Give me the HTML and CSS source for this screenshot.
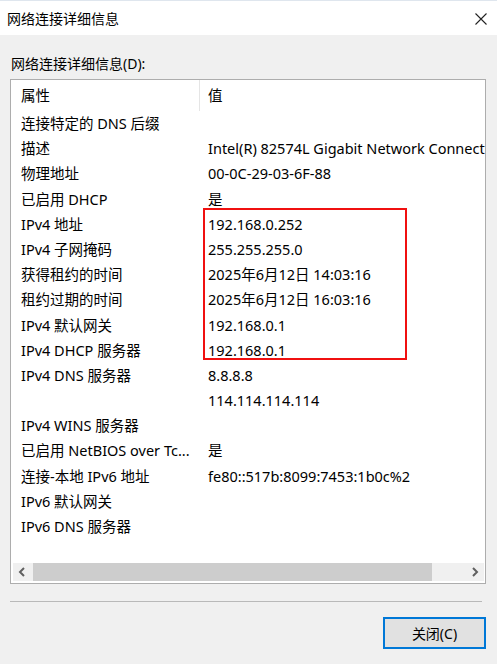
FILE: index.html
```html
<!DOCTYPE html>
<html lang="zh-CN">
<head>
    <meta charset="UTF-8">
    <title>网络连接详细信息</title>
    <link rel="stylesheet" href="styles.css">
</head>
<body>
    <div class="titlebar">
        <span class="title">网络连接详细信息</span>
        <svg class="close" width="14" height="14" viewBox="0 0 14 14">
            <path d="M1.5 1.5 L12.5 12.5 M12.5 1.5 L1.5 12.5" stroke="#222" stroke-width="1.1" fill="none"/>
        </svg>
    </div>
    <div class="content">
        <div class="caption">网络连接详细信息(D):</div>
        <div class="list">
            <div class="row header"><span>属性</span><span class="val">值</span></div>
            <div class="row"><span>连接特定的 DNS 后缀</span><span class="val"></span></div>
            <div class="row"><span>描述</span><span class="val">Intel(R) 82574L Gigabit Network Connection</span></div>
            <div class="row"><span>物理地址</span><span class="val">00-0C-29-03-6F-88</span></div>
            <div class="row"><span>已启用 DHCP</span><span class="val">是</span></div>
            <div class="row"><span>IPv4 地址</span><span class="val">192.168.0.252</span></div>
            <div class="row"><span>IPv4 子网掩码</span><span class="val">255.255.255.0</span></div>
            <div class="row"><span>获得租约的时间</span><span class="val">2025年6月12日 14:03:16</span></div>
            <div class="row"><span>租约过期的时间</span><span class="val">2025年6月12日 16:03:16</span></div>
            <div class="row"><span>IPv4 默认网关</span><span class="val">192.168.0.1</span></div>
            <div class="row"><span>IPv4 DHCP 服务器</span><span class="val">192.168.0.1</span></div>
            <div class="row"><span>IPv4 DNS 服务器</span><span class="val">8.8.8.8</span></div>
            <div class="row"><span></span><span class="val">114.114.114.114</span></div>
            <div class="row"><span>IPv4 WINS 服务器</span><span class="val"></span></div>
            <div class="row"><span>已启用 NetBIOS over Tc...</span><span class="val">是</span></div>
            <div class="row"><span>连接-本地 IPv6 地址</span><span class="val">fe80::517b:8099:7453:1b0c%2</span></div>
            <div class="row"><span>IPv6 默认网关</span><span class="val"></span></div>
            <div class="row"><span>IPv6 DNS 服务器</span><span class="val"></span></div>
            <div class="spacer"></div>
            <div class="hscroll">
                <svg class="arrow" width="20" height="18" viewBox="0 0 20 18">
                    <path d="M11 5 L7 9 L11 13" stroke="#606060" stroke-width="2" fill="none"/>
                </svg>
                <div class="thumb"></div>
                <div class="track"></div>
                <svg class="arrow" width="20" height="18" viewBox="0 0 20 18">
                    <path d="M9 5 L13 9 L9 13" stroke="#606060" stroke-width="2" fill="none"/>
                </svg>
            </div>
            <!-- highlight drawn over the screenshot -->
            <div class="mark"></div>
        </div>
        <div class="separator"></div>
        <div class="actions">
            <button class="btn">关闭(C)</button>
        </div>
    </div>
</body>
</html>
```

FILE: styles.css
```css
body {
    margin: 0;
    background-color: #f0f0f0;
    font-family: "Noto Sans", "Noto Sans CJK SC", sans-serif;
    font-size: 14.5px;
    color: #000;
    width: 497px;
    height: 664px;
    overflow: hidden;
}
.titlebar {
    height: 34px;
    background: white;
    border-top: 1px solid #dfe6ee;
    display: flex;
    align-items: center;
    justify-content: space-between;
    padding: 0 9px 0 7px;
}
.title {
    font-size: 14px;
}
.close {
    display: block;
    margin-top: 1px;
}
.content {
    padding: 0 11px 0 10px;
}
.caption {
    margin-top: 20px;
    margin-left: 1px;
    line-height: 18px;
    height: 18px;
    font-size: 14px;
}
.list {
    position: relative;
    margin-top: 6px;
    height: 503px;
    border: 1px solid #adadad;
    background: white;
    overflow: hidden;
    display: flex;
    flex-direction: column;
}
.row {
    display: grid;
    grid-template-columns: 188px 1fr;
    height: 25.2px;
    line-height: 25px;
    white-space: nowrap;
    flex-shrink: 0;
}
.row span {
    padding-left: 10px;
    overflow: hidden;
}
.row .val {
    padding-left: 9px;
    overflow: visible;
}
.row.header {
    height: 31px;
    line-height: 30px;
}
.row.header .val {
    border-left: 1px solid #e5e5e5;
    padding-left: 8px;
}
.spacer {
    flex: 1;
}
.hscroll {
    display: flex;
    height: 18px;
    margin: 0 1px 2px 2px;
    background: #f0f0f0;
    flex-shrink: 0;
}
.arrow {
    display: block;
    flex-shrink: 0;
}
.thumb {
    width: 399px;
    background: #cdcdcd;
}
.track {
    flex: 1;
}
.mark {
    position: absolute;
    left: 192px;
    top: 128px;
    width: 204px;
    height: 152px;
    border: 2px solid #f01010;
    box-sizing: border-box;
}
.separator {
    margin-top: 17px;
    margin-right: 4px;
    border-top: 1px solid #b9b9b9;
}
.actions {
    display: flex;
    justify-content: flex-end;
    margin-top: 15px;
}
.btn {
    width: 103px;
    height: 32px;
    background: #e1e1e1;
    border: 2px solid #0078d7;
    font-family: "Noto Sans", "Noto Sans CJK SC", sans-serif;
    font-size: 14px;
    color: #000;
    padding: 0;
}
```
